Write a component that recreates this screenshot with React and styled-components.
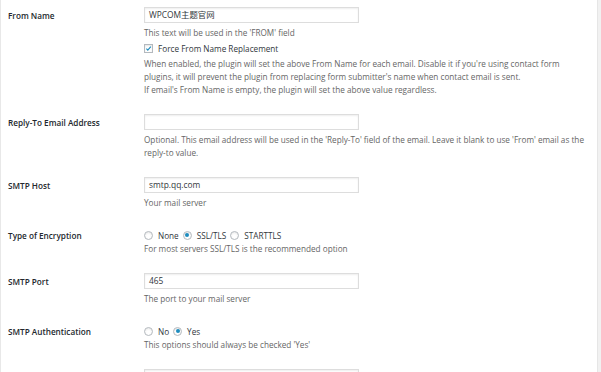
import styled, { createGlobalStyle } from 'styled-components';

const Global = createGlobalStyle`
  html, body { margin: 0; padding: 0; background: #fff; }
  body { font-family: "Open Sans", "Noto Sans CJK SC", sans-serif; }
`;

const Page = styled.div`
  display: flex;
  width: 601px;
  height: 372px;
  overflow: hidden;
  box-sizing: border-box;
  border-left: 1px solid #e8e8e8;
`;

const Main = styled.div`
  flex: 1;
  padding: 0 0 0 7px;
`;

const Gutter = styled.div`
  width: 3px;
  background: #f1f1f1;
  border-left: 1px solid #e6e6e6;
`;

const Row = styled.div`
  display: grid;
  grid-template-columns: 136px 1fr;
  padding: ${p => p.$top ?? 7}px 0 ${p => p.$bottom ?? 11}px;
`;

const Label = styled.div`
  font-size: 8.2px;
  font-weight: 600;
  color: #23282d;
  line-height: 13px;
  padding-top: ${p => p.$pad ?? 2}px;
`;

const Field = styled.div`
  display: flex;
  flex-direction: column;
  align-items: flex-start;
`;

const Input = styled.div`
  box-sizing: border-box;
  width: 215px;
  height: 16px;
  border: 1px solid #ddd;
  box-shadow: inset 0 1px 2px rgba(0, 0, 0, 0.07);
  padding: 0 4px;
  font-size: 8.4px;
  line-height: 14px;
  color: #32373c;
  margin-bottom: 3px;
`;

const Desc = styled.p`
  margin: 0;
  font-size: 8.2px;
  line-height: 13px;
  color: #666;
`;

const Options = styled.div`
  display: flex;
  align-items: center;
  height: 14px;
  margin: ${p => p.$margin || '0'};
  font-size: 8.2px;
  color: #32373c;
`;

const Option = styled.label`
  display: flex;
  align-items: center;
  gap: 5px;
  margin-right: 4px;
`;

const Box = styled.span`
  box-sizing: border-box;
  width: 9px;
  height: 9px;
  border: 1px solid #b4b9be;
  border-radius: ${p => (p.$round ? '50%' : '0')};
  box-shadow: inset 0 1px 2px rgba(0, 0, 0, 0.1);
  display: flex;
  align-items: center;
  justify-content: center;
  background: #fff;
`;

const Dot = styled.span`
  width: 4px;
  height: 4px;
  border-radius: 50%;
  background: #1e8cbe;
`;

const Check = () => (
  <svg width="9" height="9" viewBox="0 0 10 10">
    <path d="M2 5.2 L4 7.3 L8.3 2.2" fill="none" stroke="#1e8cbe" strokeWidth="1.6" />
  </svg>
);

const Radio = ({ on, children }) => (
  <Option>
    <Box $round>{on && <Dot />}</Box>
    {children}
  </Option>
);

export default function App() {
  return (
    <>
      <Global />
      <Page>
        <Main>
          <Row $top={7}>
            <Label>From Name</Label>
            <Field>
              <Input>WPCOM主题官网</Input>
              <Desc>This text will be used in the 'FROM' field</Desc>
              <Options $margin="2px 0">
                <Option>
                  <Box><Check /></Box>
                  Force From Name Replacement
                </Option>
              </Options>
              <Desc>
                When enabled, the plugin will set the above From Name for each email. Disable it if you're using contact form
                <br />
                plugins, it will prevent the plugin from replacing form submitter's name when contact email is sent.
                <br />
                If email's From Name is empty, the plugin will set the above value regardless.
              </Desc>
            </Field>
          </Row>
          <Row>
            <Label>Reply-To Email Address</Label>
            <Field>
              <Input />
              <Desc>
                Optional. This email address will be used in the 'Reply-To' field of the email. Leave it blank to use 'From' email as the
                <br />
                reply-to value.
              </Desc>
            </Field>
          </Row>
          <Row>
            <Label>SMTP Host</Label>
            <Field>
              <Input>smtp.qq.com</Input>
              <Desc>Your mail server</Desc>
            </Field>
          </Row>
          <Row $top={8}>
            <Label $pad={1}>Type of Encryption</Label>
            <Field>
              <Options>
                <Radio>None</Radio>
                <Radio on>SSL/TLS</Radio>
                <Radio>STARTTLS</Radio>
              </Options>
              <Desc>For most servers SSL/TLS is the recommended option</Desc>
            </Field>
          </Row>
          <Row>
            <Label>SMTP Port</Label>
            <Field>
              <Input>465</Input>
              <Desc>The port to your mail server</Desc>
            </Field>
          </Row>
          <Row $top={8}>
            <Label $pad={1}>SMTP Authentication</Label>
            <Field>
              <Options>
                <Radio>No</Radio>
                <Radio on>Yes</Radio>
              </Options>
              <Desc>This options should always be checked 'Yes'</Desc>
            </Field>
          </Row>
          <Row>
            <Label />
            <Field>
              <Input />
            </Field>
          </Row>
        </Main>
        <Gutter />
      </Page>
    </>
  );
}
